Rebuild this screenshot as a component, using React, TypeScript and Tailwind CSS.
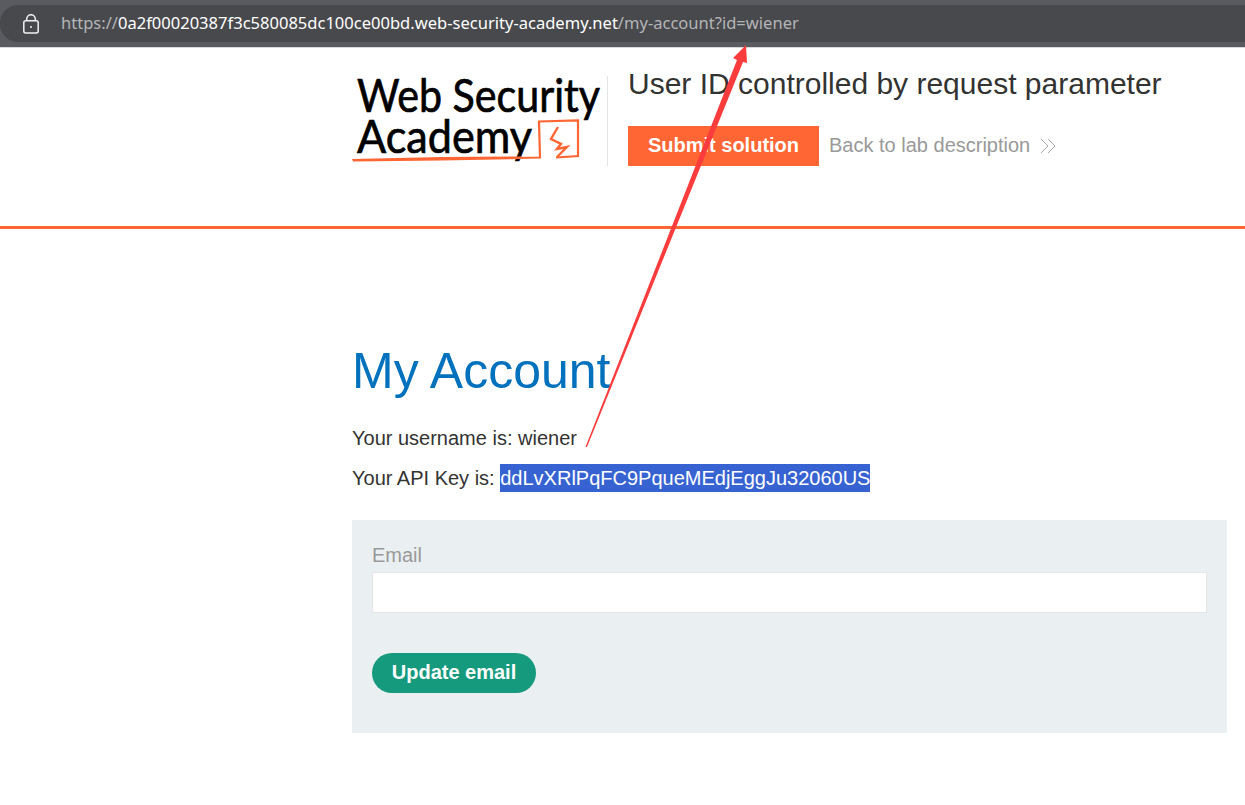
const sans = "font-['Liberation_Sans',Arial,sans-serif]";

function LockIcon() {
  return (
    <svg width="16" height="20" viewBox="0 0 16 20" fill="none" stroke="#f1f1f1" strokeWidth="1.5">
      <path d="M3.7 7V5a4.3 4.3 0 0 1 8.6 0v2" />
      <rect x="0.8" y="6.8" width="14.4" height="12.2" rx="2" />
      <circle cx="8" cy="13" r="1" fill="#f1f1f1" stroke="none" />
    </svg>
  );
}

function AddressBar() {
  return (
    <div className="h-[48px] border-b border-[#d8d8da] bg-[#5a5b60] pt-[5px]">
      <div className="flex h-[37px] items-center rounded-l-[18px] bg-[#48494d] pl-[23px]">
        <LockIcon />
        <p className="ml-[22px] whitespace-nowrap font-['Noto_Sans',sans-serif] text-[16.55px] text-[#b4b5b8]">
          https://<span className="text-white">0a2f00020387f3c580085dc100ce00bd.web-security-academy.net</span>
          /my-account?id=wiener
        </p>
      </div>
    </div>
  );
}

function Logo() {
  return (
    <svg width="255" height="92" viewBox="0 0 255 92" className="shrink-0 overflow-visible">
      <g fontFamily="Lato, sans-serif" fontSize="47" fill="#000" stroke="#000" strokeWidth="0.7">
        <text x="5" y="36" textLength="243" lengthAdjust="spacingAndGlyphs">Web Security</text>
        <text x="5" y="77" textLength="175" lengthAdjust="spacingAndGlyphs">Academy</text>
      </g>
      <path d="M165 82 L188 81.500 L187 45.500 L226 44.500 L226 80 L204 81.500" fill="none" stroke="#ff6633" strokeWidth="2.200" />
      <path d="M0 83 L90 81 L170 80.500 L170 83 L90 84.500 L1 85.500 Z" fill="#ff6633" />
      <path d="M206 51 L199 63 L209 68 L205 73 L215 71 L205 81" fill="none" stroke="#ff6633" strokeWidth="2.400" />
    </svg>
  );
}

function ChevronsIcon() {
  return (
    <svg width="16" height="16" viewBox="0 0 16 16" fill="none" stroke="#a8a8a8" strokeWidth="1" className="ml-[10px]">
      <path d="M1 1 L8 8 L1 15 M8 1 L15 8 L8 15" />
    </svg>
  );
}

function LabHeader() {
  return (
    <header className="h-[181px] border-b-[3px] border-[#ff6633] pl-[352px] pt-[28px]">
      <div className="flex">
        <Logo />
        <div className="h-[90px] w-px bg-[#e4e4e4]" />
        <div className="ml-[20px]">
          <h2 className="-mt-[10px] text-[30px] leading-[36px] text-[#333332]">User ID controlled by request parameter</h2>
          <div className="mt-[24px] flex items-center">
            <a className="flex h-[40px] w-[191px] items-center justify-center bg-[#ff6633] pb-[2px] text-[20px] font-bold text-white">
              Submit solution
            </a>
            <a className="ml-[10px] pb-[2px] text-[20px] text-[#999999]">Back to lab description</a>
            <ChevronsIcon />
          </div>
        </div>
      </div>
    </header>
  );
}

function AccountSection() {
  return (
    <main className="ml-[352px] w-[875px] pt-[112px]">
      <h1 className="text-[50px] leading-[60px] text-[#0071bc]">My Account</h1>
      <p className="mt-[23px] text-[20px] leading-[28px] text-[#333332]">Your username is: wiener</p>
      <p className="mt-[12px] text-[20px] leading-[28px] text-[#333332]">
        Your API Key is: <span className="inline-block bg-[#3763d2] text-white">ddLvXRlPqFC9PqueMEdjEggJu32060US</span>
      </p>
      <form className="mt-[28px] h-[213px] bg-[#eaeff2] px-[20px] pt-[22px]">
        <label className="block text-[20px] leading-[26px] text-[#999999]">Email</label>
        <input className="mt-[4px] block h-[41px] w-full border border-[#e6e6e6] bg-white" />
        <button type="button" className="mt-[40px] h-[40px] w-[164px] rounded-[20px] bg-[#159a7e] pb-[2px] text-[20px] font-bold text-white">
          Update email
        </button>
      </form>
    </main>
  );
}

// red annotation arrow drawn over the page
function ArrowOverlay() {
  return (
    <svg width="1245" height="805" viewBox="0 0 1245 805" className="pointer-events-none absolute left-0 top-0">
      <path d="M585.500 447 L737 60 L733 58 L746 45 L747 63 L743 62 L587 447 Z" fill="#fb3c3c" />
    </svg>
  );
}

export default function App() {
  return (
    <div className={`relative h-[805px] overflow-hidden bg-white ${sans}`}>
      <AddressBar />
      <LabHeader />
      <AccountSection />
      <ArrowOverlay />
    </div>
  );
}
